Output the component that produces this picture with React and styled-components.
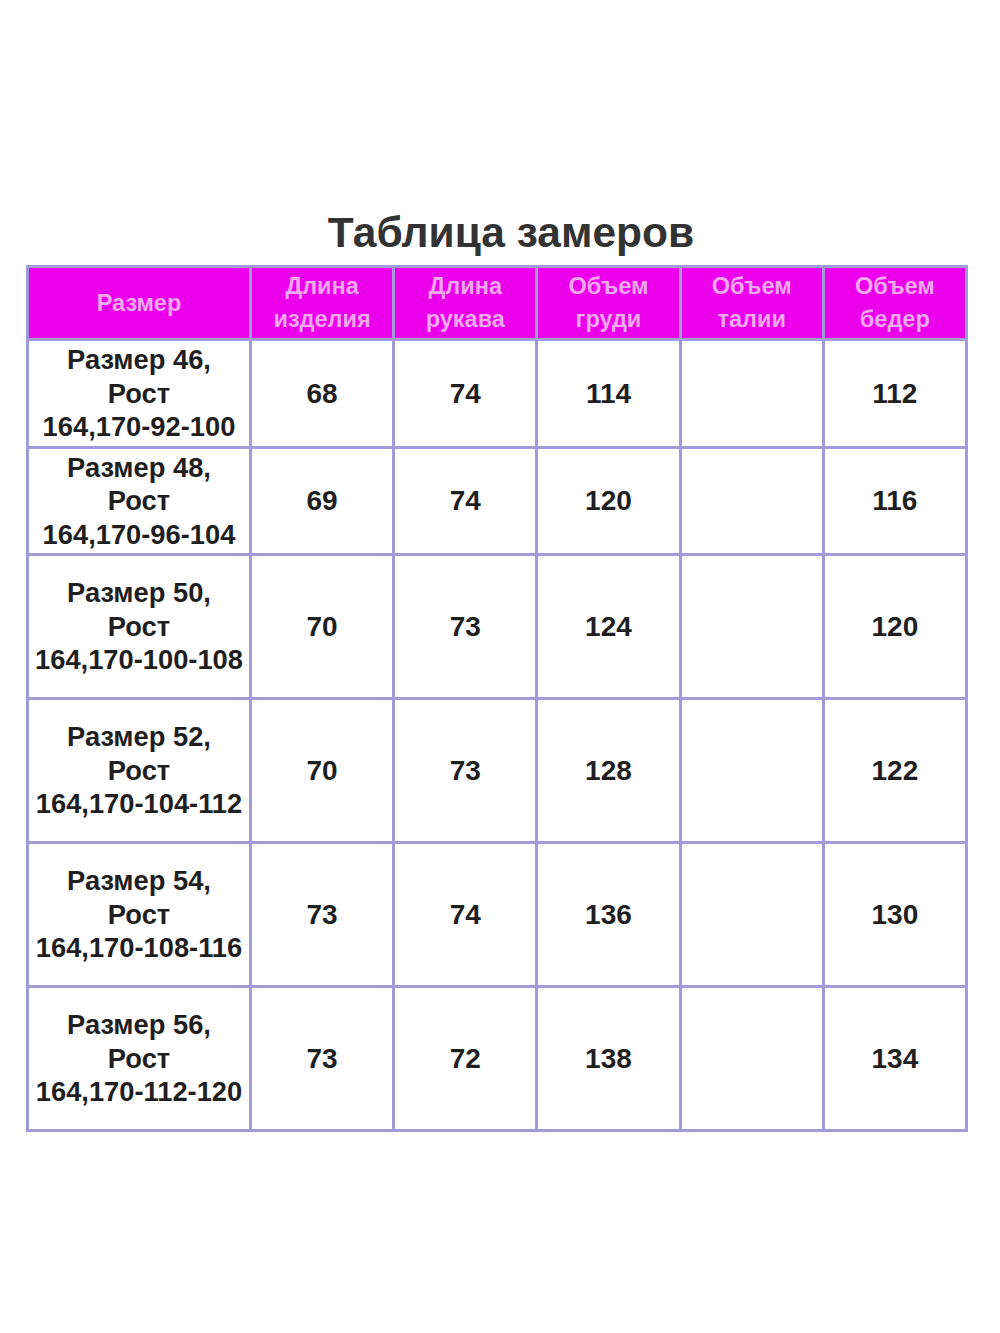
import React from 'react';
import styled, { createGlobalStyle } from 'styled-components';

const GlobalStyle = createGlobalStyle`
	html, body {
		margin: 0;
		padding: 0;
		background: #ffffff;
	}
	body {
		font-family: "Liberation Sans", Arial, sans-serif;
	}
`;

const Page = styled.div`
	width: 1000px;
	height: 1333px;
	display: flex;
	flex-direction: column;
	align-items: flex-start;
	padding: 207px 0 0 26px;
	box-sizing: border-box;
	background: #fff;
`;

const Title = styled.h1`
	align-self: center;
	margin: 0 4px 6px 0;
	font-size: 42.5px;
	line-height: 52px;
	font-weight: 700;
	color: #333333;
`;

const Grid = styled.div`
	display: grid;
	grid-template-columns: 220px repeat(5, 140.2px);
	grid-template-rows: 70px 105px 104px 141px 141px 141px 141px;
	gap: 3px;
	padding: 3px;
	background: #a19bd9;
`;

const HeadCell = styled.div`
	background: #ec00ec;
	color: #f5a8f2;
	display: flex;
	align-items: center;
	justify-content: center;
	text-align: center;
	font-size: 23.5px;
	line-height: 33px;
	font-weight: 700;
`;

const Cell = styled.div`
	background: #ffffff;
	color: #1f1f1f;
	display: flex;
	align-items: center;
	justify-content: center;
	text-align: center;
	font-size: ${(props) => (props.size === 'name' ? 27.3 : 28)}px;
	line-height: 33.5px;
	font-weight: 700;
	white-space: nowrap;
`;

const headers = [
	['Размер'],
	['Длина', 'изделия'],
	['Длина', 'рукава'],
	['Объем', 'груди'],
	['Объем', 'талии'],
	['Объем', 'бедер']
];

const rows = [
	{ size: '46', grow: '164,170-92-100', vals: ['68', '74', '114', '', '112'] },
	{ size: '48', grow: '164,170-96-104', vals: ['69', '74', '120', '', '116'] },
	{ size: '50', grow: '164,170-100-108', vals: ['70', '73', '124', '', '120'] },
	{ size: '52', grow: '164,170-104-112', vals: ['70', '73', '128', '', '122'] },
	{ size: '54', grow: '164,170-108-116', vals: ['73', '74', '136', '', '130'] },
	{ size: '56', grow: '164,170-112-120', vals: ['73', '72', '138', '', '134'] }
];

const App = () => {
	return (
		<>
			<GlobalStyle />
			<Page>
				<Title>Таблица замеров</Title>
				<Grid>
					{headers.map((h, i) => (
						<HeadCell key={'h' + i}>
							<div>
								{h.map((line, j) => (
									<div key={j}>{line}</div>
								))}
							</div>
						</HeadCell>
					))}
					{rows.map((r) => (
						<React.Fragment key={r.size}>
							<Cell size="name">
								<div>
									<div>Размер {r.size},</div>
									<div>Рост</div>
									<div>{r.grow}</div>
								</div>
							</Cell>
							{r.vals.map((v, k) => (
								<Cell key={k}>{v}</Cell>
							))}
						</React.Fragment>
					))}
				</Grid>
			</Page>
		</>
	);
};

export default App;
